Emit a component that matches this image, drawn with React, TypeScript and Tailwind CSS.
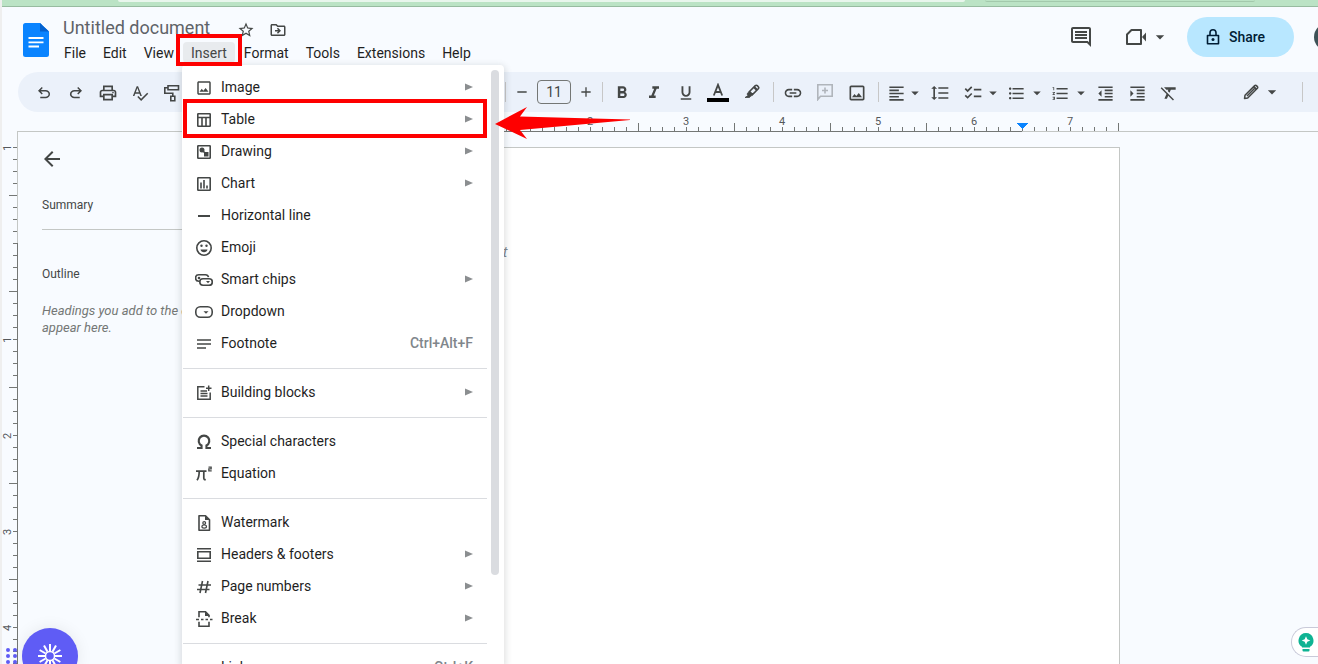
/**
 * Document editor shell with the Insert menu open: title bar, toolbar, rulers,
 * outline panel and the page itself, plus the red callouts for the walkthrough.
 */
import { useState } from "react";
import type { ReactNode } from "react";
import {
  MdAdd,
  MdArrowBack,
  MdArrowDropDown,
  MdChecklist,
  MdFormatAlignLeft,
  MdFormatBold,
  MdFormatClear,
  MdFormatIndentDecrease,
  MdFormatIndentIncrease,
  MdFormatItalic,
  MdFormatLineSpacing,
  MdFormatListBulleted,
  MdFormatListNumbered,
  MdFormatUnderlined,
  MdInsertLink,
  MdOutlineComment,
  MdOutlineDriveFileMove,
  MdOutlineImage,
  MdOutlinePrint,
  MdRemove,
  MdSpellcheck,
  MdStarBorder,
} from "react-icons/md";

type IconProps = { children: ReactNode; size?: number };

/** Outline icon on an 18px grid, one unit per pixel. */
function Line({ children, size = 18 }: IconProps) {
  return (
    <svg
      width={size}
      height={size}
      viewBox="0 0 18 18"
      fill="none"
      stroke="currentColor"
      strokeWidth={1.6}
      aria-hidden="true"
    >
      {children}
    </svg>
  );
}

const icons = {
  undo: (
    <svg width={18} height={18} viewBox="0 -960 960 960" fill="currentColor" aria-hidden="true">
      <path d="M280-200v-80h284q63 0 109.500-40T720-420q0-60-46.500-100T564-560H312l104 104-56 56-200-200 200-200 56 56-104 104h252q97 0 169.500 63T800-420q0 94-72.500 157T564-200H280Z" />
    </svg>
  ),
  redo: (
    <svg width={18} height={18} viewBox="0 -960 960 960" fill="currentColor" aria-hidden="true">
      <path d="M396-200q-97 0-169.500-63T154-420q0-94 72.500-157T396-640h252L544-744l56-56 200 200-200 200-56-56 104-104H396q-63 0-109.500 40T240-420q0 60 46.500 100T396-280h284v80H396Z" />
    </svg>
  ),
  paint: (
    <Line>
      <path d="M5 1.800h10.500v4H5zM5 3.800H1.800v5.400h8v3M7.800 12.200h4v4.500h-4z" />
    </Line>
  ),
  highlighter: (
    <Line>
      <path d="M6.500 7.500 12.300 1.700a1.500 1.500 0 0 1 2 0l1 1a1.500 1.500 0 0 1 0 2L9.500 10.500z" />
      <path d="M6 7.500 4 10 5 11.500 2 13.500H6.500L7.500 12.500 10 10.500z" fill="currentColor" strokeWidth={0.8} />
      <path d="M11 3 14 6" strokeWidth={2.400} />
    </Line>
  ),
  addComment: (
    <Line>
      <path d="M1.800 16.500V1.800h14.400v11.400H4.500zM9 4.500v6M6 7.500h6" />
    </Line>
  ),
  pencil: (
    <Line>
      <path d="M2.500 15.500 3 12.300 12.700 2.600a1.200 1.200 0 0 1 1.700 0l1 1a1.200 1.200 0 0 1 0 1.700L5.700 15zM5 13l7.500-7.500" strokeLinejoin="round" strokeWidth={1.500} />
      <path d="M11.500 3.500 14.500 6.500" strokeWidth={2} />
    </Line>
  ),
  camera: (
    <svg width={24} height={24} viewBox="0 0 24 24" fill="none" stroke="currentColor" strokeWidth={2} aria-hidden="true">
      <path d="M7.500 5H17V19H3V9.500z" strokeLinejoin="round" />
      <path d="M18 12 22 7.500v9z" fill="currentColor" stroke="none" />
    </svg>
  ),
  lock: (
    <Line>
      <path d="M3.500 7.500h11v8.300h-11zM6 7.500V4.800a3 3 0 0 1 6 0v2.700" strokeLinejoin="round" />
      <circle cx={9} cy={11.600} r={1.500} fill="currentColor" stroke="none" />
    </Line>
  ),
  table: (
    <Line>
      <rect x={2.800} y={2.800} width={12.400} height={12.400} rx={0.5} />
      <path d="M2.500 6.500h13M7 6.500v9M11 6.500v9" />
    </Line>
  ),
  drawing: (
    <Line>
      <rect x={2.800} y={2.800} width={12.400} height={12.400} rx={0.5} />
      <circle cx={7} cy={7} r={2.500} fill="currentColor" stroke="none" />
      <path d="M9 9h4.500v4.500H9z" fill="currentColor" stroke="none" />
      <path d="m8 8 3 3" />
    </Line>
  ),
  chart: (
    <Line>
      <rect x={2.800} y={2.800} width={12.400} height={12.400} rx={0.5} />
      <path d="M6 7.500v6M9 5v8.500M12 10.500v3" />
    </Line>
  ),
  rule: (
    <Line>
      <path d="M3 9h12" strokeWidth={2} />
    </Line>
  ),
  emoji: (
    <Line>
      <circle cx={9} cy={9} r={7.200} />
      <path d="M5.500 10.500h7a3.600 3.600 0 0 1-7 0z" fill="currentColor" stroke="none" />
      <circle cx={6.500} cy={6.800} r={1.200} fill="currentColor" stroke="none" />
      <circle cx={11.500} cy={6.800} r={1.200} fill="currentColor" stroke="none" />
    </Line>
  ),
  chips: (
    <Line>
      <path d="M5 10.200H3.800a3.200 3.200 0 0 1 0-6.500h6.700a3.200 3.200 0 0 1 3 2.500" />
      <rect x={4.800} y={7.800} width={12.500} height={6.500} rx={3.200} />
      <circle cx={4} cy={7} r={1.300} fill="currentColor" stroke="none" />
      <path d="M11 10h4l-2 2.300z" fill="currentColor" stroke="none" />
    </Line>
  ),
  dropdown: (
    <Line>
      <rect x={0.8} y={3.800} width={16.400} height={10.400} rx={4.500} />
      <path d="M8.500 8.200h5l-2.500 2.500z" fill="currentColor" stroke="none" />
    </Line>
  ),
  footnote: (
    <Line>
      <path d="M2 5h14M2 9h14M2 13h9" />
    </Line>
  ),
  blocks: (
    <Line>
      <path d="M9.500 2.800H2.800v12.400h12.400V8.500M5.500 7h6.500M5.500 9.500h7M5.500 12h7M11 4.200h5.500M13.700 1.500v5.500" strokeWidth={1.500} />
    </Line>
  ),
  omega: (
    <Line>
      <path d="M2 15h4.500v-2.500A5.300 5.300 0 1 1 11.500 12.500V15H16" strokeWidth={2.200} />
    </Line>
  ),
  equation: (
    <Line>
      <path d="M1 6.200h10.500M4.200 6.200c0 4-.5 7-2.200 9M8.800 6.200V13c0 1.500.8 1.800 2 1.500" strokeWidth={1.700} />
      <path d="M13.500 2.100h2.700v1.800h-2.400v2h2.900" strokeWidth={1.200} />
    </Line>
  ),
  watermark: (
    <Line>
      <path d="M4 1.800h6.500L14.500 5.800v10.400H4z" strokeLinejoin="round" />
      <path d="M10 1.500v4.500h4.500z" fill="currentColor" stroke="none" />
      <circle cx={9.200} cy={9} r={1.400} strokeWidth={1.200} />
      <ellipse cx={9.200} cy={12.600} rx={2.300} ry={1.600} strokeWidth={1.200} />
    </Line>
  ),
  headers: (
    <Line>
      <path d="M2 2.800h14M2 15.200h14M2.800 5.800h12.400v6.400H2.800z" />
    </Line>
  ),
  hash: (
    <Line>
      <path d="M7.500 3 5 15M13 3l-2.500 12M3.500 7H16M2 11.500h12.500" />
    </Line>
  ),
  break: (
    <Line>
      <path d="M4 7.200V1.800h6.500L14 5.300v1.900M4 11.800v4.400h10v-4.400" />
      <path d="M10 1.500v4.500h4.500z" fill="currentColor" stroke="none" />
      <path d="M1 9.500h3M6 9.500h2.500M10.500 9.500H13M15 9.500h2.500" />
    </Line>
  ),
};

type MenuEntry = {
  label: string;
  icon?: ReactNode;
  submenu?: boolean;
  shortcut?: string;
};

const INSERT_GROUPS: readonly MenuEntry[][] = [
  [
    { label: "Image", icon: <MdOutlineImage size={18} />, submenu: true },
    { label: "Table", icon: icons.table, submenu: true },
    { label: "Drawing", icon: icons.drawing, submenu: true },
    { label: "Chart", icon: icons.chart, submenu: true },
    { label: "Horizontal line", icon: icons.rule },
    { label: "Emoji", icon: icons.emoji },
    { label: "Smart chips", icon: icons.chips, submenu: true },
    { label: "Dropdown", icon: icons.dropdown },
    { label: "Footnote", icon: icons.footnote, shortcut: "Ctrl+Alt+F" },
  ],
  [{ label: "Building blocks", icon: icons.blocks, submenu: true }],
  [
    { label: "Special characters", icon: icons.omega },
    { label: "Equation", icon: icons.equation },
  ],
  [
    { label: "Watermark", icon: icons.watermark },
    { label: "Headers & footers", icon: icons.headers, submenu: true },
    { label: "Page numbers", icon: icons.hash, submenu: true },
    { label: "Break", icon: icons.break, submenu: true },
  ],
  [{ label: "Link", shortcut: "Ctrl+K" }],
];

const MENUS = ["File", "Edit", "View", "Insert", "Format", "Tools", "Extensions", "Help"];

function Tool({ label, children }: { label: string; children: ReactNode }) {
  return (
    <button type="button" aria-label={label} className="flex h-8 w-8 shrink-0 items-center justify-center pt-0.5">
      {children}
    </button>
  );
}

function CaretTool({ label, children }: { label: string; children: ReactNode }) {
  return (
    <button type="button" aria-label={label} className="flex h-8 w-11 shrink-0 items-center justify-between pt-0.5 pl-[7px]">
      {children}
      <MdArrowDropDown size={18} className="-mr-0.5" />
    </button>
  );
}

function Divider() {
  return <div className="h-5 w-px shrink-0 bg-[#c7c7c7]" />;
}

function TitleBar() {
  const [title, setTitle] = useState("Untitled document");
  return (
    <header className="flex h-[65px] shrink-0 items-start pl-[21px]">
      <svg width={26} height={34} viewBox="0 0 26 34" className="mt-4 shrink-0" aria-hidden="true">
        <path d="M2.500 0H17l9 8.500V31.500a2.500 2.500 0 0 1-2.500 2.500h-21A2.500 2.500 0 0 1 0 31.500v-29A2.500 2.500 0 0 1 2.500 0z" fill="#0a84ff" />
        <path d="M17 0v8.500h9z" fill="#0361cf" />
        <path d="M5.500 15h15M5.500 19.300h15M5.500 23.500h10.500" stroke="#fff" strokeWidth={1.800} />
      </svg>
      <div className="ml-[7px] pt-2.5">
        <div className="flex h-[25px] items-center pl-[7px] text-[#444746]">
          <input
            aria-label="Document name"
            value={title}
            onChange={(e) => setTitle(e.target.value)}
            className="w-[174px] bg-transparent pb-1 text-lg text-[#5f6368] outline-none"
          />
          <button type="button" aria-label="Star">
            <MdStarBorder size={18} />
          </button>
          <button type="button" aria-label="Move" className="ml-3.5">
            <MdOutlineDriveFileMove size={18} />
          </button>
        </div>
        <nav className="flex gap-px text-sm text-[#1f1f1f]">
          {MENUS.map((name) => (
            <button
              key={name}
              type="button"
              className={
                name === "Insert"
                  ? "h-[21px] rounded bg-[#e8ebee] px-2 text-[#444746]"
                  : "h-[21px] px-2"
              }
            >
              {name}
            </button>
          ))}
        </nav>
      </div>
      <div className="ml-auto flex items-center pt-2.5 text-[#444746]">
        <button type="button" aria-label="Comments">
          <MdOutlineComment size={24} />
        </button>
        <button type="button" aria-label="Join a call" className="ml-[31px] flex items-center">
          {icons.camera}
          <MdArrowDropDown size={20} className="ml-0.5" />
        </button>
        <button
          type="button"
          className="ml-[17px] flex h-10 w-[107px] items-center rounded-full bg-[#b8e7ff] pl-[17px] text-sm font-medium text-[#001d35]"
        >
          {icons.lock}
          <span className="ml-[7px]">Share</span>
        </button>
        <div className="ml-5 h-7 w-1 overflow-hidden">
          <div className="h-7 w-7 rounded-full bg-[#3d5257]" />
        </div>
      </div>
    </header>
  );
}

function Toolbar() {
  const [size, setSize] = useState("11");
  return (
    <div className="ml-4 flex h-10 shrink-0 items-center overflow-hidden rounded-l-full bg-[#ebf1fa] pl-2.5 text-[#444746]">
      <Tool label="Undo">{icons.undo}</Tool>
      <Tool label="Redo">{icons.redo}</Tool>
      <Tool label="Print"><MdOutlinePrint size={20} /></Tool>
      <Tool label="Spelling and grammar check"><MdSpellcheck size={18} /></Tool>
      <Tool label="Paint format">{icons.paint}</Tool>
      <div className="w-[317px] shrink-0" />
      <Divider />
      <button type="button" aria-label="Decrease font size" className="flex h-8 w-[31px] shrink-0 items-center justify-center">
        <MdRemove size={16} />
      </button>
      <input
        aria-label="Font size"
        value={size}
        onChange={(e) => setSize(e.target.value)}
        className="h-6 w-[34px] shrink-0 rounded border border-[#747775] bg-transparent text-center text-sm outline-none"
      />
      <button type="button" aria-label="Increase font size" className="flex h-8 w-[30px] shrink-0 items-center justify-center">
        <MdAdd size={16} />
      </button>
      <div className="w-px shrink-0" />
      <Divider />
      <div className="w-[3px] shrink-0" />
      <Tool label="Bold"><MdFormatBold size={20} /></Tool>
      <Tool label="Italic"><MdFormatItalic size={20} /></Tool>
      <Tool label="Underline"><MdFormatUnderlined size={18} /></Tool>
      <Tool label="Text color">
        <svg width={22} height={20} viewBox="0 0 22 20" fill="none" aria-hidden="true">
          <path d="M6.800 12.500 11 1.800 15.200 12.500M8.300 9h5.400" stroke="currentColor" strokeWidth={1.800} />
          <path d="M0 17h22" stroke="#000" strokeWidth={4} />
        </svg>
      </Tool>
      <div className="w-0.5 shrink-0" />
      <Tool label="Highlight color">{icons.highlighter}</Tool>
      <div className="w-[5px] shrink-0" />
      <Divider />
      <div className="w-[3px] shrink-0" />
      <Tool label="Insert link"><MdInsertLink size={20} /></Tool>
      <button type="button" aria-label="Add comment" disabled className="flex h-8 w-8 shrink-0 items-center justify-center text-[#b0b5bb]">
        {icons.addComment}
      </button>
      <Tool label="Insert image"><MdOutlineImage size={20} /></Tool>
      <div className="w-[5px] shrink-0" />
      <Divider />
      <button type="button" aria-label="Align" className="flex h-8 w-[45px] shrink-0 items-center pt-0.5 pl-2">
        <MdFormatAlignLeft size={19} />
        <MdArrowDropDown size={18} />
      </button>
      <Tool label="Line and paragraph spacing"><MdFormatLineSpacing size={20} /></Tool>
      <CaretTool label="Checklist"><MdChecklist size={20} /></CaretTool>
      <CaretTool label="Bulleted list"><MdFormatListBulleted size={19} /></CaretTool>
      <CaretTool label="Numbered list"><MdFormatListNumbered size={19} /></CaretTool>
      <div className="w-px shrink-0" />
      <Tool label="Decrease indent"><MdFormatIndentDecrease size={19} /></Tool>
      <Tool label="Increase indent"><MdFormatIndentIncrease size={19} /></Tool>
      <Tool label="Clear formatting"><MdFormatClear size={20} /></Tool>
      <button type="button" aria-label="Editing mode" className="ml-auto flex shrink-0 items-center">
        {icons.pencil}
        <MdArrowDropDown size={20} className="mr-5 ml-0.5" />
      </button>
      <Divider />
      <div className="w-[15px] shrink-0" />
    </div>
  );
}

/** Inches run at 96px; origin is the left text margin. */
function HorizontalRuler() {
  const origin = 381;
  const ticks = Array.from({ length: 69 }, (_, i) => i - 8);
  return (
    <svg className="ml-[15px] h-5 shrink-0" shapeRendering="crispEdges" aria-hidden="true">
      <rect x={0} y={19} width="100%" height={1} fill="#c4c7c5" />
      <rect x={origin} y={19} width={624} height={1} fill="#747775" />
      {ticks.map((t) => {
        const tall = Math.abs(t % 8) === 4;
        return (
          <rect key={t} x={origin + t * 12} y={tall ? 11 : 15} width={1} height={tall ? 8 : 4} fill="#747775" />
        );
      })}
      {[1, 2, 3, 4, 5, 6, 7].map((n) => (
        <text key={n} x={origin + n * 96} y={13} textAnchor="middle" className="fill-[#55585b] text-[11px]">
          {n}
        </text>
      ))}
      <path d={`M${origin + 618} 11h12l-6 6z`} fill="#0a84ff" />
    </svg>
  );
}

function VerticalRuler() {
  const origin = 112;
  const ticks = Array.from({ length: 44 }, (_, i) => i - 8);
  return (
    <svg className="h-full w-4 shrink-0" aria-hidden="true">
      <g shapeRendering="crispEdges">
        <rect x={15} y={0} width={1} height={origin} fill="#c4c7c5" />
        <rect x={15} y={origin} width={1} height="100%" fill="#747775" />
        {ticks.map((t) => {
          const tall = Math.abs(t % 8) === 4;
          return (
            <rect key={t} x={tall ? 7 : 11} y={origin + t * 12} width={tall ? 8 : 4} height={1} fill="#747775" />
          );
        })}
      </g>
      {[-1, 1, 2, 3, 4].map((n) => (
        <text
          key={n}
          x={0}
          y={0}
          textAnchor="middle"
          transform={`translate(9 ${origin + 1 + n * 96}) rotate(-90)`}
          className="fill-[#55585b] text-[11px]"
        >
          {Math.abs(n)}
        </text>
      ))}
    </svg>
  );
}

function OutlinePanel() {
  return (
    <aside className="w-[286px] shrink-0 pr-8 pl-6 text-[#444746]">
      <button type="button" aria-label="Close outline" className="-ml-0.5 mt-4 block">
        <MdArrowBack size={24} />
      </button>
      <h2 className="mt-[26px] border-b border-[#c4c7c5] pb-4 text-xs leading-4">Summary</h2>
      <h2 className="mt-9 text-xs leading-4">Outline</h2>
      <p className="mt-5 text-[13px] leading-[17px] text-[#747775] italic">
        Headings you add to the document will appear here.
      </p>
    </aside>
  );
}

function InsertMenu() {
  return (
    <div
      role="menu"
      aria-label="Insert"
      className="absolute top-[65px] bottom-0 left-[182px] flex w-[322px] overflow-hidden rounded-t bg-white shadow-[0_2px_6px_2px_rgba(60,64,67,0.15)]"
    >
      <div className="ml-px w-[304px] pt-1.5 text-sm text-[#1f1f1f]">
        {INSERT_GROUPS.map((group, i) => (
          <div key={i} className={i > 0 ? "mt-[9px] border-t border-[#dadce0] pt-[7px]" : ""}>
            {group.map((item) => (
              <button
                key={item.label}
                type="button"
                role="menuitem"
                className="flex h-8 w-full items-center pr-3.5 pl-3"
              >
                <span className="mt-0.5 mr-2 flex w-[18px] justify-center text-[#444746]">{item.icon}</span>
                {item.label}
                {item.submenu && (
                  <svg width={8} height={8} viewBox="0 0 8 8" className="ml-auto" aria-hidden="true">
                    <path d="M0 .5v7L8 4z" fill="#8b8e90" />
                  </svg>
                )}
                {item.shortcut && (
                  <span className="ml-auto font-medium text-[#80868b]">{item.shortcut}</span>
                )}
              </button>
            ))}
          </div>
        ))}
      </div>
      <div className="mt-[5px] ml-1 h-[505px] w-2 rounded-full bg-[#dadce0]" />
    </div>
  );
}

function Callouts() {
  return (
    <div className="pointer-events-none" aria-hidden="true">
      <div className="absolute top-[34px] left-[176px] h-8 w-[66px] border-4 border-[#fe0000]" />
      <div className="absolute top-[99px] left-[183px] h-[39px] w-[304px] border-4 border-[#fe0000]" />
      <svg className="absolute top-[107px] left-[495px]" width={136} height={32} viewBox="0 0 136 32">
        <path d="M0 17 32 0l-7 9.500L135 12.500V13L25 23l7 9z" fill="#fe0000" />
      </svg>
    </div>
  );
}

function FloatingWidgets() {
  const rays = Array.from({ length: 12 }, (_, i) => i * 30);
  return (
    <>
      <svg className="absolute bottom-0 left-0" width={20} height={18} aria-hidden="true">
        {[4, 10, 16].map((y) => (
          <g key={y} fill="#5f5cf5">
            <circle cx={8} cy={y} r={2} />
            <circle cx={15} cy={y} r={2} />
          </g>
        ))}
      </svg>
      <button
        type="button"
        aria-label="Open recorder"
        className="absolute -bottom-5 left-[22px] flex h-14 w-14 items-center justify-center rounded-full bg-[#5f5cf5] shadow-[0_0_16px_rgba(0,0,0,0.08)]"
      >
        <svg width={24} height={24} viewBox="-12 -12 24 24" stroke="#fff" strokeWidth={2} aria-hidden="true">
          {rays.map((a) => (
            <path key={a} d="M0-5V-12" transform={`rotate(${a})`} />
          ))}
          <circle r={4.500} fill="none" strokeWidth={1.500} />
        </svg>
      </button>
      <button
        type="button"
        aria-label="Suggestions"
        className="absolute right-0 bottom-[7px] flex h-[30px] w-[27px] items-center rounded-l-full border border-r-0 border-[#c9cad9] bg-white pl-1.5"
      >
        <svg width={16} height={19} viewBox="0 0 16 19" aria-hidden="true">
          <path d="M8 0a7.500 7.500 0 0 1 4 13.800V14.500H4v-.7A7.500 7.500 0 0 1 8 0zM4.500 16h7v1.500a1 1 0 0 1-1 1h-5a1 1 0 0 1-1-1z" fill="#0fb393" />
          <path d="M8 3.200 9.300 6.200 12.300 7.500 9.300 8.800 8 11.800 6.700 8.800 3.700 7.500 6.700 6.200z" fill="#fff" />
        </svg>
      </button>
    </>
  );
}

export default function App() {
  return (
    <div className="relative flex h-screen overflow-hidden bg-[#f8fbff] font-[Roboto,sans-serif]">
      <div className="w-0.5 shrink-0 bg-[#efefef]" />
      <div className="flex min-w-0 flex-1 flex-col">
        <div className="flex h-[7px] shrink-0 border-b border-[#97bba0] bg-[#bbe3c5] pr-[63px] pl-[116px]">
          <div className="h-0.5 flex-1 rounded-b bg-[#e9f6ed]" />
          <div className="ml-5 h-0.5 w-[270px] rounded-b border-b border-[#a3c9ac]" />
        </div>
        <TitleBar />
        <Toolbar />
        <HorizontalRuler />
        <main className="-mt-px flex min-h-0 flex-1">
          <VerticalRuler />
          <OutlinePanel />
          <div className="mt-4 w-[816px] shrink-0 border border-b-0 border-[#c4c7c5] bg-white px-[93px] pt-[93px] font-['Liberation_Sans',sans-serif] text-[15px] text-[#80868b] italic">
            Type @ to insert
          </div>
        </main>
      </div>
      <InsertMenu />
      <FloatingWidgets />
      <Callouts />
    </div>
  );
}
